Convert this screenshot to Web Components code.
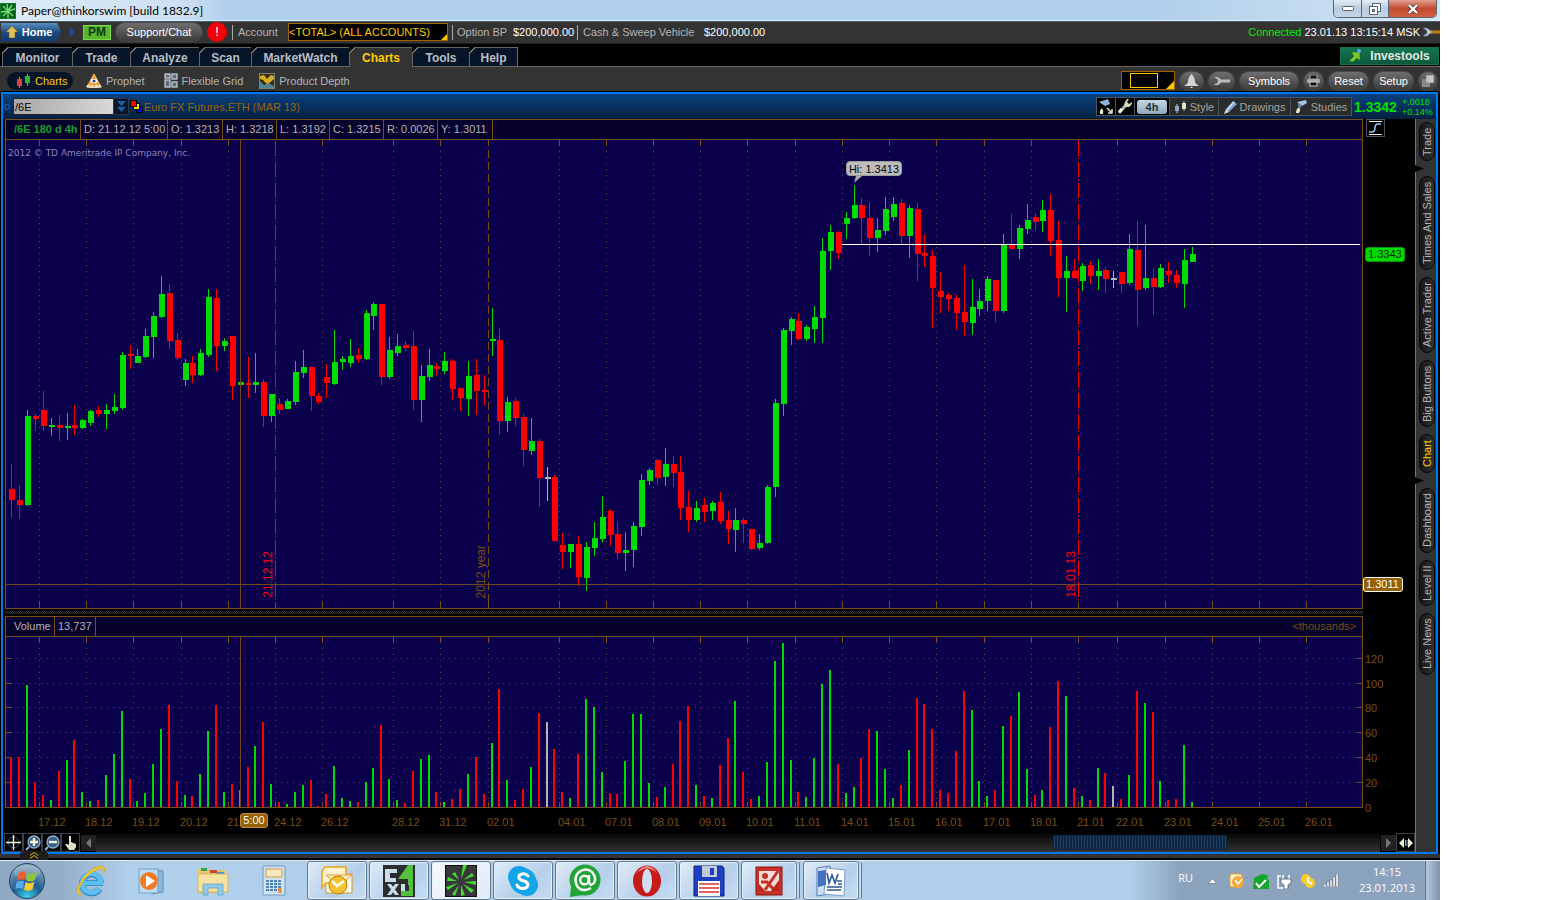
<!DOCTYPE html>
<html lang="en">
<head>
<meta charset="utf-8">
<title>Paper@thinkorswim [build 1832.9]</title>
<style>
html,body{margin:0;height:100%;background:#fff}
body{box-sizing:border-box;padding-right:122px;font:11px/14px "Liberation Sans",Arial,sans-serif;color:#b4b4b4}
</style>
</head>
<body>
<trading-desktop></trading-desktop>
<script>
const RESET = `*,*::before,*::after{box-sizing:border-box}button,input,select{font:inherit;color:inherit;margin:0;padding:0;border:0;background:none;border-radius:0}button{white-space:nowrap;display:flex;align-items:center;justify-content:center}`;
function define(name, html, after) {
  const t = document.createElement('template');
  t.innerHTML = html.replace('<style>', '<style>' + RESET);
  customElements.define(name, class extends HTMLElement {
    constructor() {
      super();
      this.attachShadow({mode: 'open'}).append(t.content.cloneNode(true));
    }
    connectedCallback() { if (after) after(this, this.shadowRoot); }
  });
}

/* ---------- icon set ---------- */
const ICONS = {
  leaf: [16,16,'<rect width="16" height="16" fill="#0b7a2a"/><rect x="1" y="1" width="14" height="14" fill="#0a5a1e"/><path d="M8 8L7 1M8 8L12 2M8 8L15 6M8 8L13 13M8 8L8 15M8 8L3 13M8 8L1 9M8 8L3 3" stroke="#6fe06f" stroke-width="1.4"/>'],
  home: [12,12,'<path d="M6 0L12 6H9V12H3V6H0Z" fill="#e3c25a" stroke="#6b5520" stroke-width=".6"/>'],
  tri: [7,12,'<path d="M0 0L6 6L0 12Z" fill="#17498c"/>'],
  wrench: [18,10,'<path d="M1 1.5Q3 0 5 1.2Q7 2.2 8 3.5H11V6.500H8Q6 9 4 9.200Q2 9.500 1 8L4 7.200L5 5L4 2.700Z" fill="#c3cade" stroke="#555a66" stroke-width=".5"/><rect x="9" y="3.5" width="9" height="3" fill="#c87a10"/>'],
  wrenchg: [18,10,'<path d="M1 1.5Q3 0 5 1.2Q7 2.2 8 3.5H17V6.500H8Q6 9 4 9.200Q2 9.500 1 8L4 7.200L5 5L4 2.700Z" fill="#bdbdbd"/>'],
  candles: [15,14,'<path d="M3.500 3V14M11.500 0V12" stroke="#999" stroke-width="1"/><rect x="1" y="5" width="5" height="7" fill="#d84444"/><rect x="9" y="2" width="5" height="7" fill="#2ab83a"/>'],
  prophet: [16,16,'<path d="M8 1L15 14H1Z" fill="#f2932a" stroke="#f7c878"/><ellipse cx="8" cy="8" rx="3.500" ry="2.300" fill="#fff"/><circle cx="8" cy="8" r="1.600" fill="#2a4a8a"/><path d="M0 14L2 11L4 13L6 11L8 14L10 11L12 13L14 11L16 14L12 15H4Z" fill="#e9dcc2"/>'],
  grid: [14,15,'<g fill="#5c6a78" stroke="#c3ccd6" stroke-width="1.3"><rect x="1" y="1" width="5" height="4"/><rect x="8" y="1" width="5" height="5"/><rect x="1" y="7" width="5" height="7"/><rect x="8" y="9" width="5" height="5"/></g>'],
  depth: [16,16,'<rect x=".5" y=".5" width="15" height="15" fill="#3a2d10" stroke="#77807a"/><path d="M1 8L5 12L9 10L15 13V15H1Z" fill="#4b8698"/><path d="M1 3L5 2L8 6L12 2L15 3V6L9 11L7 10L4 7L1 6Z" fill="#d6ae20"/>'],
  bell: [15,14,'<path d="M7.500 0Q9 1 9 2Q11 3.500 11 8Q12 10.500 15 12H0Q3 10.500 4 8Q4 3.500 6 2Q6 1 7.500 0Z" fill="#d2d2d2"/><rect x="6.500" y="13" width="2" height="1" fill="#eee"/>'],
  print: [13,12,'<rect x="3" y="0" width="7" height="4" fill="#111" stroke="#aaa"/><rect x="0" y="4" width="13" height="4" rx="1" fill="#a8a8a8"/><rect x="3" y="7" width="7" height="4" fill="#111" stroke="#ccc"/>'],
  windows: [12,12,'<rect x="0" y="4" width="8" height="8" fill="#8a8a8a"/><rect x="4" y="0" width="8" height="8" fill="#c6c6c6" stroke="#777" stroke-width=".6"/>'],
  invest: [13,14,'<path d="M2 3H11V12L8 9L4 13L0 12L5 7Z" fill="#7cc832" stroke="#2c6a12" stroke-width=".7"/><circle cx="10" cy="2" r="2" fill="#5aa2ff"/>'],
  dbl: [9,11,'<path d="M0 0H9L4.500 5ZM0 6H9L4.500 11Z" fill="#1f5ea8"/>'],
  flag: [13,13,'<rect x="6.500" y="6.500" width="6" height="6" fill="#00f" stroke="#000"/><rect x="3.500" y="3.500" width="6" height="6" fill="#ffe800" stroke="#000"/><rect x=".5" y=".5" width="6" height="6" fill="#f00" stroke="#000"/>'],
  flaskx: [14,16,'<path d="M0 3L9 0L11 5L6 7Z" fill="#8fb2d8"/><path d="M3 9Q5 12 4 15H1Q0 12 3 9Z" fill="#e6ecc8"/><path d="M8 9L13 14M13 10V14H9" stroke="#dfe6c8" stroke-width="1.500" fill="none"/>'],
  tool: [14,15,'<path d="M1 14L8 6" stroke="#a9b4bd" stroke-width="3"/><path d="M1 13L4 10" stroke="#f3f3d2" stroke-width="3"/><path d="M7 3L9 0H11L9 3L11 5L14 3V5L11 8H8L6 6Z" fill="#cfd8b8"/>'],
  style: [13,12,'<path d="M3 3V12M10 0V10" stroke="#ccc"/><rect x="1" y="5" width="4" height="5" fill="#8ca6c4"/><rect x="8" y="2" width="4" height="6" fill="#dfe8c6"/>'],
  pencil: [13,14,'<path d="M2 9L9 1L13 4L5 12Z" fill="#7ba4d4"/><path d="M3 10L10 2" stroke="#cfe2f5" stroke-width="1.500"/><path d="M2 9L5 12L0 14Z" fill="#e9e3c0"/>'],
  flask: [13,14,'<path d="M2 2L11 0L12 3L7 6Z" fill="#a9c3df"/><path d="M4 7Q6 9 4 13H1Q1 9 4 7Z" fill="#e6ecd0"/><path d="M3 3L7 6L5 8L3 6Z" fill="#5d83ad"/>'],
  curve: [13,14,'<path d="M0 .5H13M0 13.500H13" stroke="#f2f2cc"/><path d="M0 11H4Q6 10 6 7Q6 3 9 3H12" stroke="#8cc4ec" stroke-width="1.600" fill="none"/>'],
  cross: [15,15,'<circle cx="7.500" cy="7.500" r="5.500" fill="none" stroke="#3f5a78"/><path d="M7.500 0V15M0 7.500H15" stroke="#f4f4d8" stroke-width="1.400"/>'],
  zin: [16,16,'<circle cx="9" cy="7" r="6" fill="#395e82" stroke="#8fb0d0" stroke-width="1.300"/><path d="M4 12L1 15" stroke="#8fb0d0" stroke-width="2"/><path d="M9 3V11M5 7H13" stroke="#f4f4d8" stroke-width="2.400"/>'],
  zout: [16,16,'<circle cx="9" cy="7" r="6" fill="#395e82" stroke="#8fb0d0" stroke-width="1.300"/><path d="M4 12L1 15" stroke="#8fb0d0" stroke-width="2"/><path d="M5 7H13" stroke="#f4f4d8" stroke-width="2.400"/>'],
  hand: [12,14,'<path d="M4 0H6V6L11 8V11L9 14H4L0 8H2L4 9Z" fill="#dde3c6"/>'],
  expand: [14,10,'<path d="M5 0V10L0 5ZM9 0V10L14 5Z" fill="#eef2d2"/><path d="M6.500 2V8M8 2V8" stroke="#6fa8d8"/>'],
  left: [5,10,'<path d="M5 0V10L0 5Z" fill="#777"/>'],
  right: [5,10,'<path d="M0 0V10L5 5Z" fill="#777"/>'],
  chev: [8,7,'<path d="M0 3.500L4 .5L8 3.500M0 6.500L4 3.500L8 6.500" stroke="#e0b000" fill="none"/>'],
  orb: [38,38,'<defs><radialGradient id="a" cx=".5" cy=".95" r=".9"><stop offset="0" stop-color="#3fd0ee"/><stop offset=".45" stop-color="#1d5d92"/><stop offset="1" stop-color="#8aa6bf"/></radialGradient></defs><circle cx="19" cy="19" r="17.500" fill="url(#a)" stroke="#29415c"/><ellipse cx="19" cy="10" rx="13" ry="7" fill="#fff" opacity=".2"/><path d="M11 11Q14 8 18 10L16.500 18Q12 16 9 19Z" fill="#ec5f2c"/><path d="M19.500 10.500Q24 13 29 10L27 18Q22 21 18 18Z" fill="#8cc63e"/><path d="M8.500 20.500Q12 17.500 16 19.500L15 27Q11 25 7 27.500Z" fill="#56acec"/><path d="M17.500 20Q22 22.500 26.500 19.500L24.500 27.500Q20 30 16 27.500Z" fill="#fbc934"/>'],
  ie: [30,32,'<path d="M6 18H27M25 18A9.500 9.500 0 1 0 23.500 24" stroke="#2b86c5" stroke-width="6" fill="none"/><path d="M7 18H26.500M25 18A9.500 9.500 0 1 0 23 24" stroke="#5cc0f2" stroke-width="4.600" fill="none"/><path d="M5 30Q-3 29 4 18Q11 4 24 1Q31 1 28 8Q29 3 23 4Q11 8 5 20Q1 27 6 29Z" fill="#f8c832" stroke="#c79410" stroke-width=".5"/>'],
  wmp: [28,28,'<path d="M14 3L25 4V25L14 27Z" fill="#8bb7dc" stroke="#5d8cb5"/><rect x="1" y="2" width="19" height="24" fill="#bcdcf2" stroke="#6da0c8"/><circle cx="11" cy="14" r="9" fill="#f47a20"/><path d="M8 8L17 14L8 20Z" fill="#fff"/>'],
  folder: [32,30,'<path d="M1 4Q1 2 3 2H11L13 4H28V27H1Z" fill="#e6c76e"/><path d="M4 2H10V5H4Z" fill="#2da84a"/><path d="M13 4H20V7H13Z" fill="#cf4430"/><path d="M20 6H27V9H20Z" fill="#4b93d8"/><path d="M1 8H31V26H1Z" fill="#f6e29e" stroke="#c8a850" stroke-width=".7"/><path d="M6 29V18H26V29H21V22H11V29Z" fill="#8fcbe6" stroke="#5a9cc0" stroke-width=".7"/>'],
  calc: [24,31,'<rect x="1" y="1" width="22" height="29" rx="1" fill="#cfe3f4" stroke="#6c98c0"/><rect x="4" y="4" width="16" height="8" fill="#f6e8c0" stroke="#d79a3c"/><g stroke="#4d82b5" stroke-width="2" stroke-dasharray="3 1"><path d="M4 16H20M4 19H20M4 22H20M4 25H17"/></g><path d="M18 23V28" stroke="#ef8a1d" stroke-width="3"/>'],
  outlook: [32,30,'<rect x="5" y="8" width="26" height="19" fill="#fffaf0" stroke="#d9962a"/><path d="M1 5L4 1H25V17H5L1 22Z" fill="#fff3d0" stroke="#e8a520" stroke-width="1.600"/><path d="M5 9H31L18 20Z" fill="#fdeec0" stroke="#e0a040"/><circle cx="17" cy="19" r="9" fill="#f6c22e" stroke="#b97f0a"/><path d="M11 15L16 20L23 15" stroke="#fff" stroke-width="2.500" fill="none"/>'],
  fx: [32,32,'<rect width="32" height="32" fill="#2b2d2f"/><path d="M2 4H14V8H7V13H13V17H2ZM4 19H8L16 30H12ZM12 19H16L8 30H4ZM18 19V30H22V19Z" fill="#c9dceb"/><path d="M30 0V20H25V14H15L25 0ZM18 26H26V20H30V31H18Z" fill="#53c13b"/>'],
  splash: [32,32,'<rect x=".5" y=".5" width="31" height="31" fill="#38383c" stroke="#111"/><path d="M16 14L18 0H22ZM18 15L27 8L29 11ZM19 17L31 16V20ZM18 19L29 25L26 28ZM16 20L20 30L16 31ZM14 20L10 31L7 29ZM13 18L3 25L1 22ZM12 16L2 16L3 12ZM14 15L7 9L10 7Z" fill="#3fdc2c"/>'],
  skype: [32,32,'<rect x="1" y="1" width="22" height="22" rx="11" fill="#12a5e8"/><rect x="9" y="9" width="22" height="22" rx="11" fill="#12a5e8"/><circle cx="16" cy="16" r="13" fill="#12a5e8"/><path d="M21 11Q19 8 15 9Q11 10 12 13Q13 15 17 16Q21 17 21 20Q20 24 15 23.500Q11 23 10 20" stroke="#fff" stroke-width="3" fill="none" stroke-linecap="round"/>'],
  at: [34,34,'<circle cx="17" cy="16" r="15.500" fill="#22a336"/><path d="M3 23L2 33L15 31Z" fill="#22a336"/><path d="M23 24Q14 29 9 22Q5 13 11 8Q18 3 24 8Q29 14 26 19Q22 23 21 18V11" stroke="#fff" stroke-width="2.400" fill="none"/><circle cx="16.500" cy="16" r="4.300" stroke="#fff" stroke-width="2.400" fill="none"/>'],
  opera: [30,32,'<ellipse cx="15" cy="16" rx="14" ry="15.500" fill="#c71a1a"/><ellipse cx="15" cy="16" rx="5" ry="12" fill="#cfdfef"/><path d="M5 8Q8 2 15 1Q22 2 25 8Q15 -1 5 8Z" fill="#f08a80"/>'],
  floppy: [32,32,'<path d="M1 1H29L31 3V31H1Z" fill="#1d3fc4" stroke="#0a2080"/><rect x="9" y="1" width="15" height="11" fill="#c2cad6"/><rect x="17" y="3" width="4" height="7" fill="#1d3fc4"/><rect x="5" y="16" width="22" height="15" fill="#fff"/><path d="M6 19H26M6 23H26M6 27H26" stroke="#e03030" stroke-width="1.500"/>'],
  redx: [28,30,'<rect x="1" y="1" width="26" height="28" fill="#c8302a" stroke="#8a1510"/><rect x="4" y="5" width="20" height="20" fill="#f4dcd8"/><path d="M23 5L10 24M6 16L12 16L20 25" stroke="#c23028" stroke-width="3"/><path d="M4 25V18L10 25ZM24 14V25L16 25Z" fill="#b82820"/><circle cx="10" cy="10" r="3" fill="#c23028"/>'],
  word: [32,32,'<path d="M2 3L15 1L20 28L2 31Z" fill="#cfe0f4" stroke="#5378b8"/><path d="M11 3L30 5L29 31L9 29Z" fill="#fff" stroke="#7e9cc8"/><path d="M3 6L11 5V20L3 22Z" fill="#4273bc"/><path d="M12 8L14 18L17 10L20 18L23 9M12 22H27M12 25H26M22 16H27M23 19H27" stroke="#2a5699" stroke-width="1.600" fill="none"/>'],
  up: [9,6,'<path d="M4.500 .5L8.500 5.500H.5Z" fill="#fff" stroke="#5b6878" stroke-width=".6"/>'],
  tout: [16,16,'<rect x="1" y="1" width="12" height="13" rx="2" fill="#fff2d0" stroke="#e7a020"/><circle cx="9" cy="9" r="6" fill="#f3a83a"/><path d="M6 7L9 11L13 6" stroke="#fff" stroke-width="1.500" fill="none"/>'],
  tok: [16,16,'<path d="M1 5L9 1L15 2L14 6L16 7V16H0Z" fill="#14a62c"/><path d="M3 10L6 14L13 7" stroke="#fff" stroke-width="2" fill="none"/>'],
  tplug: [15,16,'<path d="M4 3H1V15H8" fill="none" stroke="#fff" stroke-width="1.500"/><path d="M6 2V6M12 2V6" stroke="#fff" stroke-width="1.500"/><path d="M4 6H14V10L11 12V16H7V12L4 10Z" fill="#fff" stroke="#3a4656" stroke-width=".7"/>'],
  tphone: [16,16,'<rect x="1" y="1" width="10" height="10" rx="5" fill="#fbcc28"/><rect x="5" y="5" width="10" height="10" rx="5" fill="#fbcc28"/><path d="M8 4V9L12 11" stroke="#fff" stroke-width="2" fill="none"/>'],
  tnet: [15,13,'<g fill="#fff" stroke="#4b5868" stroke-width=".4"><rect x="0" y="10" width="2" height="3"/><rect x="3" y="8" width="2" height="5"/><rect x="6" y="6" width="2" height="7"/><rect x="9" y="3" width="2" height="10"/><rect x="12" y="0" width="2" height="13"/></g>'],
  wmin: [12,5,'<rect x=".5" y=".5" width="11" height="4" rx="1" fill="#fff" stroke="#5a6372"/>'],
  wmax: [12,12,'<rect x="3.500" y=".5" width="8" height="8" fill="#fff" stroke="#5a6372"/><rect x=".5" y="3.500" width="8" height="8" fill="#fff" stroke="#5a6372"/><rect x="3.500" y="6.500" width="2" height="2" fill="#9fb0c4" stroke="#5a6372"/>'],
  wclose: [12,10,'<path d="M2 1L10 9M10 1L2 9" stroke="#5a3a3a" stroke-width="4"/><path d="M2 1L10 9M10 1L2 9" stroke="#fff" stroke-width="2.400"/>']
};
customElements.define('ui-icon', class extends HTMLElement {
  constructor() { super(); this.attachShadow({mode: 'open'}); }
  connectedCallback() {
    const [w, h, body] = ICONS[this.getAttribute('name')];
    this.shadowRoot.innerHTML = `<style>:host{display:block;flex:none;width:${w}px;height:${h}px}svg{display:block}</style><svg width="${w}" height="${h}" viewBox="0 0 ${w} ${h}" fill="none" aria-hidden="true">${body}</svg>`;
  }
});

/* ---------- window title ---------- */
define('window-title', `<style>
:host{display:flex;height:22px;flex:none;background:linear-gradient(90deg,#dcebf8,#cde0f3 180px,#b0cfeb 230px,#b0cfeb 80%,#d3e4f3);border-bottom:1px solid #4b5a6b;box-shadow:inset 0 -1px #dcebf8;color:#000;font:12px/20px Lato,"Open Sans",sans-serif;padding:0 3px 0 0;gap:5px}
ui-icon.l{margin-top:3px}
h1{font:inherit;margin:0;flex:1;padding-top:1px}
.b{display:flex;height:18px;border:1px solid #5a6675;border-top:0;border-radius:0 0 5px 5px;overflow:hidden}
.b button{width:27px;background:linear-gradient(#e3edf7,#b9cbdf 50%,#c4d5e8)}
.b button+button{border-left:1px solid #5a6675}
.b .x{width:48px;background:linear-gradient(#e0a090,#c44a30 50%,#d0603f)}
</style><ui-icon class="l" name="leaf"></ui-icon><h1>Paper@thinkorswim [build 1832.9]</h1>
<div class="b"><button aria-label="Minimize"><ui-icon name="wmin"></ui-icon></button><button aria-label="Restore"><ui-icon name="wmax"></ui-icon></button><button class="x" aria-label="Close"><ui-icon name="wclose"></ui-icon></button></div>`);

/* ---------- pill button ---------- */
define('pill-button', `<style>
:host{display:flex;flex:none}
button{width:100%;border-radius:10px;background:linear-gradient(#6e6e6e,#3c3c3c);border:1px solid #444a52;color:#fff}
</style><button><slot></slot></button>`, (el, r) => { if (el.title) r.querySelector('button').setAttribute('aria-label', el.title); });

/* ---------- account row ---------- */
define('account-bar', `<style>
:host{display:flex;flex:none;height:22px;background:#333;align-items:center;padding:0 0 1px 1px;color:#b4b4b4;border-bottom:1px solid #1c1c1c;white-space:nowrap}
.home{width:60px;height:19px;gap:4px;color:#fff;font-weight:bold;background:linear-gradient(#5b8fc0,#1b4a80 50%,#123a6c);clip-path:polygon(0 0,56px 0,60px 9px,56px 19px,0 19px);padding-right:4px}
.pm{width:28px;height:15px;margin-left:7px;font:bold 12px/15px "Liberation Sans",sans-serif;color:#10380c;background:#58b82c;border:1px solid #7ed850}
.tri{margin-left:8px}
pill-button{width:88px;height:20px;margin-left:4px}
.al{width:20px;height:20px;margin-left:4px;border-radius:10px;background:#f00008;color:#fff;font:13px/20px "Liberation Sans",sans-serif}
i{width:1px;height:15px;background:#aaa;flex:none}
.sel{position:relative;width:160px;height:18px}
select{appearance:none;width:100%;height:100%;background:#000;border:1px solid #a06400;color:#ffc800;padding-left:0;font-size:11px}
.sel::after{content:"";position:absolute;right:1px;bottom:1px;border:3px solid;border-color:transparent #ffc800 #ffc800 transparent}
b{font-weight:normal;color:#fff}
.c{color:#00f000;margin-left:auto}
</style><button class="home"><ui-icon name="home"></ui-icon>Home</button><ui-icon class="tri" name="tri"></ui-icon><button class="pm">PM</button><pill-button>Support/Chat</pill-button><button class="al">!</button>
<i style="margin:0 5px 0 5px"></i><label for="acc" style="width:50px">Account</label><span class="sel"><select id="acc"><option>&lt;TOTAL&gt; (ALL ACCOUNTS)</option></select></span>
<i style="margin:0 4px 0 4px"></i><span style="width:56px">Option BP</span><b style="width:64px">$200,000.00</b><i style="margin-right:5px"></i><span style="width:121px">Cash &amp; Sweep Vehicle</span><b>$200,000.00</b>
<span class="c">Connected</span><b style="margin:0 2px 0 3px">23.01.13 13:15:14 MSK</b><ui-icon name="wrench"></ui-icon>`);

/* ---------- main tabs ---------- */
define('main-tab', `<style>
:host{display:flex;flex:none}
button{position:relative;width:100%;height:20px;background:#061428;border-top:1px solid #666;border-left:1px solid #666;font:bold 12px/14px "Liberation Sans",Arial,sans-serif;color:#b9bec4;padding-top:1px}
button::before{content:"";position:absolute;left:-1px;top:-1px;width:6px;height:6px;background:linear-gradient(135deg,#000 48%,#777 48%,#777 60%,transparent 60%)}
:host([active]) button{background:#333;color:#ffcc00}
:host(:not([active])) button{border-bottom:1px solid #666}
:host(:last-of-type) button{border-right:1px solid #666}
</style><button role="tab"><slot></slot></button>`);
define('main-tabs', `<style>
:host{display:flex;flex:none;height:23px;background:#000;align-items:flex-end;box-shadow:inset 0 -1px #666}
nav{display:flex;padding-left:2px}
.inv{margin:0 1px 2px auto;width:99px;height:18px;gap:8px;background:linear-gradient(#14734e,#0b5a3c);color:#e2e8e4;border:1px solid #14734e;font:bold 12px/14px "Liberation Sans",sans-serif}
</style><nav role="tablist"><main-tab style="width:70px">Monitor</main-tab><main-tab style="width:58px">Trade</main-tab><main-tab style="width:69px">Analyze</main-tab><main-tab style="width:52px">Scan</main-tab><main-tab style="width:98px">MarketWatch</main-tab><main-tab style="width:63px" active>Charts</main-tab><main-tab style="width:57px">Tools</main-tab><main-tab style="width:49px">Help</main-tab></nav>
<button class="inv"><ui-icon name="invest"></ui-icon>Investools</button>`);

/* ---------- sub toolbar ---------- */
define('sub-bar', `<style>
:host{display:flex;flex:none;height:25px;background:#333;align-items:center;padding:3px 2px 0 7px;border-bottom:1px solid #000;color:#b4b4b4;white-space:nowrap}
button{height:18px;gap:4px;justify-content:flex-start}
.on{width:66px;background:#061428;border-radius:9px;color:#ffc800;padding-left:9px}
.box{position:relative;width:54px;height:19px;background:#000;border:1px solid #a06400;margin-left:auto}
.box::before{content:"";width:28px;height:15px;border:1px solid #ffc800;margin-left:8px}
.box::after{content:"";position:absolute;right:0;bottom:0;border:4px solid;border-color:transparent #ffc800 #ffc800 transparent}
pill-button{height:20px;margin-left:4px}
</style><button class="on"><ui-icon name="candles"></ui-icon>Charts</button><button style="margin-left:13px"><ui-icon name="prophet"></ui-icon>Prophet</button><button style="margin-left:19px"><ui-icon name="grid"></ui-icon>Flexible Grid</button><button style="margin-left:16px"><ui-icon name="depth"></ui-icon>Product Depth</button>
<button class="box" aria-label="Layout"></button><pill-button title="Alerts" style="width:25px"><ui-icon name="bell"></ui-icon></pill-button><pill-button title="Tools" style="width:27px"><ui-icon name="wrenchg"></ui-icon></pill-button><pill-button style="width:60px">Symbols</pill-button><pill-button title="Print" style="width:21px"><ui-icon name="print"></ui-icon></pill-button><pill-button style="width:41px">Reset</pill-button><pill-button style="width:41px">Setup</pill-button><pill-button title="Windows" style="width:20px"><ui-icon name="windows"></ui-icon></pill-button>`);

/* ---------- symbol bar ---------- */
define('symbol-bar', `<style>
:host{display:flex;flex:none;height:25px;background:linear-gradient(#0a4180,#04203f);align-items:center;padding:0 2px 0 1px;white-space:nowrap}
.dot{width:6px;height:6px;border:1px solid #1566c0;border-radius:3px;margin-right:3px}
input{width:100px;height:17px;background:linear-gradient(90deg,#a8a8a8,#d8d8d8);color:#000;border:1px solid #222;padding-left:1px;font-size:11px;border-right:0}
.dd{width:16px;height:17px;background:#0a1626;border:1px solid #26384c}
.nm{color:#9a6408;margin:0 auto 0 1px;font:inherit}
.flag{margin-left:1px}
.t{height:19px;background:#2b2b2b;border:1px solid #4a5560;color:#a2a2a2;gap:3px;margin-right:-1px}
.h{width:30px;height:14px;border-radius:3px;background:linear-gradient(#c6d6e2,#8fa8bc);color:#26323c;font:bold 11px/14px "Liberation Sans",sans-serif}
.p{font:bold 14px/18px "Liberation Sans",sans-serif;color:#00e000;width:51px;padding-left:3px}
.g{color:#00e000;font:9px/10px "Liberation Sans",sans-serif;width:32px}
</style><span class="dot"></span><input aria-label="Symbol" value="/6E"><button class="dd" aria-label="Symbol list"><ui-icon name="dbl"></ui-icon></button><ui-icon class="flag" name="flag"></ui-icon><h2 class="nm">Euro FX Futures,ETH (MAR 13)</h2>
<button class="t" style="width:20px;background:#000" aria-label="Quick study"><ui-icon name="flaskx"></ui-icon></button><button class="t" style="width:20px;background:#000" aria-label="Settings"><ui-icon name="tool"></ui-icon></button><button class="t" style="width:36px;background:#000"><span class="h">4h</span></button><button class="t" style="width:50px"><ui-icon name="style"></ui-icon>Style</button><button class="t" style="width:73px"><ui-icon name="pencil"></ui-icon>Drawings</button><button class="t" style="width:62px"><ui-icon name="flask"></ui-icon>Studies</button>
<span class="p">1.3342</span><span class="g">+.0018<br>+0.14%</span>`);

/* ---------- side tabs ---------- */
define('side-tab', `<style>
:host{display:flex;flex:none;width:16px}
button{width:16px;height:100%;writing-mode:vertical-rl;transform:rotate(180deg);border-radius:8px;background:linear-gradient(90deg,#303030,#161616);border:1px solid #0a0a0a;color:#b4b4b4;line-height:14px}
:host([active]) button{color:#ffc800}
</style><button><slot></slot></button>`);
define('side-tabs', `<style>
:host{display:flex;flex-direction:column;flex:none;width:21px;background:#333;border-left:1px solid #777;padding:3px 0 0 3px;gap:7px}
hr{border:0;margin:-3px 0 -3px -4px;width:9px;height:7px;background:#000;clip-path:polygon(0 0,100% 50%,0 100%)}
</style><side-tab style="height:39px">Trade</side-tab><hr><side-tab style="height:94px">Times And Sales</side-tab><side-tab style="height:76px">Active Trader</side-tab><side-tab style="height:67px">Big Buttons</side-tab><side-tab style="height:39px" active>Chart</side-tab><hr><side-tab style="height:65px">Dashboard</side-tab><side-tab style="height:46px">Level II</side-tab><side-tab style="height:62px">Live News</side-tab>`);

/* ---------- bars: colour high bodyTop bodyBottom low volume ---------- */
const BARS = `r464 489 500 518 49,r485 500 505 519 50,g410 416 505 506 122,r414 416 419 431 25,r391 410 426 431 12,g418 425 427 436 7,r415 425 428 441 36,g413 426 428 440 47,r405 425 428 435 67,g419 420 428 429 15,g410 411 423 426 6,r406 410 414 417 7,g404 410 414 429 32,g394 407 411 414 53,g352 355 408 410 96,r345 354 356 369 28,g349 356 363 363 6,g329 336 357 358 14,g312 316 337 358 43,g276 294 317 318 78,r284 293 341 349 102,r333 340 358 360 26,g359 363 380 386 12,r356 363 375 383 11,g349 353 375 376 33,g289 297 355 357 76,r289 298 346 371 102,g338 341 346 351 15,r336 336 386 400 23,g379 382 385 405 17,r357 383 385 398 40,g353 382 385 393 61,r379 382 416 427 85,g394 394 416 422 23,r398 404 410 414 5,g399 401 409 409 3,g361 372 402 405 15,g350 367 373 378 22,r366 367 396 411 27,r393 396 402 404 1,r364 377 383 398 13,g330 362 384 385 41,g356 359 362 370 9,g339 356 363 367 6,r348 355 359 363 5,g310 313 359 360 25,g302 304 316 330 39,r304 304 377 385 82,g337 350 377 379 28,g334 346 353 356 7,r341 345 348 351 4,r331 346 400 410 36,g365 376 400 422 48,g349 365 377 381 52,r363 366 369 376 15,g352 361 371 374 5,r359 361 389 400 8,r388 388 398 411 18,g361 376 399 416 33,r359 375 391 415 50,r375 390 392 405 13,g308 339 341 356 64,r328 340 421 435 118,g397 402 421 432 27,r398 401 418 426 7,r414 417 450 466 18,g418 441 451 455 40,r439 441 478 507 94,w467 477 479 501 85,r475 477 541 541 58,r533 545 552 569 15,g544 544 552 568 9,r536 544 577 586 53,g542 547 578 591 108,g522 538 548 556 100,g496 517 539 542 35,r509 511 535 546 14,r522 534 553 559 13,g532 550 553 571 46,g522 526 550 567 93,g474 480 527 536 93,g468 470 481 485 24,r459 460 478 485 10,g448 464 477 486 20,r456 464 473 487 43,r456 472 508 520 86,r491 507 520 532 101,g501 508 520 522 22,r498 505 512 522 11,g501 503 511 520 9,r492 502 521 524 42,r511 520 529 544 69,g508 520 530 552 106,r518 520 524 543 35,r529 529 549 550 8,g534 543 548 550 11,g485 487 543 544 45,g399 403 487 497 146,g328 330 404 416 164,g317 319 331 345 47,r313 321 339 340 15,g325 327 339 341 10,g306 317 329 343 49,g238 251 318 343 123,g225 232 251 270 137,r231 232 253 259 43,g212 218 224 239 14,g185 205 218 219 20,r198 205 218 244 49,r202 218 238 256 78,g218 230 238 252 76,g197 209 231 235 38,g197 204 217 221 9,r199 203 236 244 22,g205 208 236 258 57,r203 209 254 281 109,r234 253 256 267 103,r250 256 288 328 78,r272 291 297 313 17,r293 295 299 311 14,r295 298 313 330 56,r265 312 322 336 116,g279 307 323 335 97,g289 301 309 316 26,g276 279 301 311 11,r280 280 311 322 17,g234 245 311 313 81,r214 245 249 250 91,g225 228 249 259 115,g204 220 229 234 38,r213 217 222 231 12,g200 210 221 232 17,r194 210 241 256 80,r221 240 278 297 126,g256 271 278 312 111,r259 271 278 278 19,g263 266 281 291 11,r261 265 276 284 7,g259 271 276 290 39,r267 270 279 293 34,w271 278 280 288 21,r272 272 284 293 8,g234 249 283 285 32,r221 250 290 326 116,g225 278 288 290 104,r268 278 287 315 95,g264 268 287 288 26,r262 271 275 283 7,r270 275 283 288 8,g249 260 284 308 62,g247 254 262 262 5`.split(',').map(s => [s[0], ...s.slice(1).split(' ').map(Number)]);
const FILL = {r: '#ff0000', g: '#00dc00', w: '#b4b4b4'};
const LEFT = 6, WIDTH = 1356, BROWN = '#7a4e14';
const barX = i => Math.round(11.45 + 7.87 * i);
const pct = x => ((x - LEFT) / WIDTH * 100) + '%';
const DAYS = [[39,'17.12'],[86,'18.12'],[133,'19.12'],[181,'20.12'],[228,'21'],[275,'24.12'],[322,'26.12'],[393,'28.12'],[440,'31.12'],[488,'02.01'],[559,'04.01'],[606,'07.01'],[653,'08.01'],[700,'09.01'],[747,'10.01'],[795,'11.01'],[842,'14.01'],[889,'15.01'],[936,'16.01'],[984,'17.01'],[1031,'18.01'],[1078,'21.01'],[1117,'22.01'],[1165,'23.01'],[1212,'24.01'],[1259,'25.01'],[1306,'26.01']];
const vline = (x, y1, y2, c, dash) => `<path d="M${x + .5} ${y1}V${y2}" stroke="${c}"${dash ? ` stroke-dasharray="${dash}"` : ''}/>`;
const hline = (y, x1, x2, c, dash) => `<path d="M${x1} ${y + .5}H${x2}" stroke="${c}"${dash ? ` stroke-dasharray="${dash}"` : ''}/>`;
const PLOT = `:host{display:block;position:relative;min-height:0;background:#0a004c}svg{position:absolute;inset:0;width:100%;height:100%;display:block}`;

define('price-plot', `<style>${PLOT}
.cr{position:absolute;left:2px;top:6px;color:#8a86b0;font:9px/14px "DejaVu Sans",sans-serif}
.v{position:absolute;writing-mode:vertical-rl;transform:rotate(180deg);font-size:12px;line-height:12px;bottom:10px}
.hi{position:absolute;left:${pct(846)};top:21px;height:15px;width:56px;border-radius:4px;background:#bdbdbd;border:1px solid #999;color:#000;text-align:center;line-height:14px;white-space:nowrap}
.hi::after{content:"";position:absolute;left:7px;top:14px;width:8px;height:7px;background:#aaa;clip-path:polygon(25% 0,100% 0,0 100%)}
</style><svg viewBox="6 140 1356 468" preserveAspectRatio="none" shape-rendering="crispEdges" fill="none" role="img" aria-label="Price chart"></svg>
<span class="cr">2012 © TD Ameritrade IP Company, Inc.</span><span class="v" style="left:${pct(262)};color:#f00">21.12.12</span><span class="v" style="left:${pct(475)};color:${BROWN}">2012 year</span><span class="v" style="left:${pct(1065)};color:#f00">18.01.13</span><span class="hi">Hi: 1.3413</span>`,
(el, r) => {
  let s = '';
  for (const [x] of DAYS) {
    s += vline(x, 602, 608, BROWN);
    if (x === 275 || x === 1078) s += vline(x, 141, 602, '#ff0000', '15 2 1 3');
    else if (x === 488) s += vline(x, 150, 602, BROWN, '8 4') + vline(x, 140, 146, BROWN);
    else s += vline(x, 140, 146, BROWN) + vline(x, 151, 602, '#66463a', '1 5');
  }
  BARS.forEach(([c, h, t, b, l], i) => {
    const x = barX(i);
    s += `<path fill="${FILL[c]}" d="M${x} ${h}h1V${l}h-1ZM${x - 2} ${t}h6V${b}h-6Z"/>`;
  });
  s += vline(240, 140, 608, '#6d4a18') + hline(584, 6, 1362, '#6d4a18') + hline(244, 842, 1360, '#ffffff');
  r.querySelector('svg').innerHTML = s;
});

define('volume-plot', `<style>${PLOT}</style><svg viewBox="6 637 1356 170" preserveAspectRatio="none" shape-rendering="crispEdges" fill="none" role="img" aria-label="Volume chart"></svg>`,
(el, r) => {
  let s = '';
  for (const [x] of DAYS) s += vline(x, 637, 643, BROWN) + vline(x, 648, 801, '#66463a', '1 5') + vline(x, 802, 807, BROWN);
  for (const y of [658, 683, 707, 732, 757, 782]) s += hline(y, 6, 12, BROWN) + hline(y, 17, 1356, '#66463a', '1 5') + hline(y, 1357, 1362, BROWN);
  BARS.forEach(([c, , , , , v], i) => { s += `<path fill="${FILL[c]}" d="M${barX(i) - 1} 807v${-v}h2V807Z"/>`; });
  s += vline(240, 637, 807, '#6d4a18');
  r.querySelector('svg').innerHTML = s;
});

/* ---------- chart area ---------- */
define('info-row', `<style>
:host{display:flex;flex:none;height:20px;background:#06002d;border-bottom:1px solid ${BROWN};line-height:18px;color:#b4b4b4;white-space:nowrap}
</style><slot></slot>`);
define('chart-area', `<style>
:host{display:flex;flex:1;min-width:0;min-height:0;flex-direction:column;background:#000;padding-left:2px}
.row{display:flex;min-height:0}
.pane{display:flex;flex-direction:column;flex:1;min-width:0;border:1px solid ${BROWN}}
price-plot,volume-plot{flex:1}
.price{flex:490}.vol{flex:192}
.split{height:7px;flex:none;padding:2px 0}
.split::before{content:"";display:block;height:3px;background:repeating-conic-gradient(#3a3a3a 0 25%,#000 0 50%) 0 0/2px 2px;margin-right:52px}
.y{position:relative;width:52px;flex:none;color:${BROWN}}
.y span,.tag{position:absolute;left:2px;line-height:12px}
info-row span{border-right:1px solid ${BROWN};padding:0 0 0 3px;flex:none}
.y .tag,.tag{border-radius:3px;height:15px;line-height:13px;width:40px;padding-left:2px;border:1px solid}
.brown{background:#966000;border-color:#c09040;color:#fff}
.x{position:relative;height:25px;flex:none;margin:0 53px 0 1px;color:${BROWN}}
.x span{position:absolute;top:7px}
.x .tag{top:5px;width:28px;text-align:center;padding:0}
.bot{display:flex;height:19px;flex:none;margin-left:-1px}
.ib{width:19px;border:1px solid #3b444e;background:#000;height:19px}
.sb{width:15px;background:#222;height:16px;margin-left:1px;align-self:center}
.track{flex:1;display:flex;background:linear-gradient(#050505,#333);padding:2px 0 2px}
.track::before{content:"";flex:958}
.track::after{content:"";flex:153}
.thumb{flex:172;background:repeating-linear-gradient(90deg,#1d4068 0 1px,#10253f 1px 3px);border:1px solid #0f2338}
.curve{width:19px;height:18px;border:1px solid #4a5560;margin-left:3px}
</style>
<div class="row price"><div class="pane"><info-row><span style="width:75px;padding-left:8px;color:#14a028;font-weight:bold">/6E 180 d 4h</span><span style="width:87px">D: 21.12.12 5:00</span><span style="width:55px">O: 1.3213</span><span style="width:54px">H: 1.3218</span><span style="width:53px">L: 1.3192</span><span style="width:54px">C: 1.3215</span><span style="width:54px">R: 0.0026</span><span style="width:55px">Y: 1.3011</span></info-row><price-plot></price-plot></div>
<div class="y"><button class="curve" aria-label="Scale"><ui-icon name="curve"></ui-icon></button><span class="tag" style="top:26.2%;background:#00dc00;border-color:#009a00;color:#003000">1.3343</span><span class="tag brown" style="top:93.5%;left:0">1.3011</span></div></div>
<div class="split"></div>
<div class="row vol"><div class="pane"><info-row><span style="width:49px;padding-left:8px">Volume</span><span style="width:41px">13,737</span><em style="margin-left:auto;padding-right:6px;font-style:normal;color:${BROWN}">&lt;thousands&gt;</em></info-row><volume-plot></volume-plot></div><div class="y" id="vy"></div></div>
<div class="x" id="dates"></div>
<div class="bot"><button class="ib" aria-label="Crosshair"><ui-icon name="cross"></ui-icon></button><button class="ib" aria-label="Zoom in"><ui-icon name="zin"></ui-icon></button><button class="ib" aria-label="Zoom out"><ui-icon name="zout"></ui-icon></button><button class="ib" aria-label="Pan"><ui-icon name="hand"></ui-icon></button><button class="sb" aria-label="Scroll left"><ui-icon name="left"></ui-icon></button><div class="track"><div class="thumb"></div></div><button class="sb" aria-label="Scroll right"><ui-icon name="right"></ui-icon></button><button class="ib" aria-label="Expand"><ui-icon name="expand"></ui-icon></button></div>`,
(el, r) => {
  r.getElementById('dates').innerHTML = DAYS.map(([x, t]) => `<span style="left:${pct(x - 1)}">${t}</span>`).join('') + `<span class="tag brown" style="left:${pct(240)}">5:00</span>`;
  r.getElementById('vy').innerHTML = [[120,659],[100,684],[80,708],[60,733],[40,758],[20,783],[0,808]].map(([t, y]) => `<span style="top:${(y - 6 - 616) / 192 * 100}%">${t}</span>`).join('');
});

define('chart-frame', `<style>
:host{display:flex;flex:1;flex-direction:column;min-height:0;border:2px solid #0078f0;margin:0 2px 0 1px}
.m{display:flex;flex:1;min-height:0}
</style><symbol-bar></symbol-bar><div class="m"><chart-area></chart-area><side-tabs></side-tabs></div>`);

/* ---------- taskbar ---------- */
define('task-item', `<style>
:host{display:flex;flex:none;width:60px;height:39px;margin-right:2px}
button{width:100%;border:1px solid #5d7894;border-radius:3px;background:linear-gradient(135deg,#dfecf8,#b5cfea 60%,#c7dcf1);box-shadow:inset 0 0 0 1px #e6f1fb}
:host([active]) button{background:linear-gradient(135deg,#f6fafd,#dfeaf5)}
:host([stack]) button{width:56px;box-shadow:inset 0 0 0 1px #e6f1fb,3px 0 0 -1px #c7dcf1,4px 0 0 -1px #5d7894}
</style><button><slot></slot></button>`, (el, r) => r.querySelector('button').setAttribute('aria-label', el.title));
define('task-bar', `<style>
:host{display:flex;flex:none;height:40px;align-items:center;background:linear-gradient(90deg,#8fa9c4,#94aec9 60px,#b0cfeb 130px,#b0cfeb 1130px,#8ba3bd 1180px,#8ba3bd);border-top:1px solid #dcebf8;color:#fff;font:11px/16px "Open Sans","Noto Sans",sans-serif}
.q{width:61px;height:36px;flex:none}
.q:first-of-type{width:54px;margin-right:6px}
.q:last-of-type{margin-right:3px}
.tray{display:flex;align-items:center;margin-left:auto}
.tray ui-icon{margin-right:8px}
.clk{text-align:center;width:60px;margin:0 8px 2px 10px}
.show{width:15px;height:39px;border-left:1px solid #60758c;background:linear-gradient(90deg,#b6c6d8,#7d95b0)}
</style><button class="q" aria-label="Start"><ui-icon name="orb"></ui-icon></button><button class="q" aria-label="Internet Explorer"><ui-icon name="ie"></ui-icon></button><button class="q" aria-label="Media Player"><ui-icon name="wmp"></ui-icon></button><button class="q" aria-label="Explorer"><ui-icon name="folder"></ui-icon></button><button class="q" aria-label="Calculator"><ui-icon name="calc"></ui-icon></button>
<task-item title="Outlook"><ui-icon name="outlook"></ui-icon></task-item><task-item title="FX4U"><ui-icon name="fx"></ui-icon></task-item><task-item title="thinkorswim" active><ui-icon name="splash"></ui-icon></task-item><task-item title="Skype"><ui-icon name="skype"></ui-icon></task-item><task-item title="Agent"><ui-icon name="at"></ui-icon></task-item><task-item title="Opera"><ui-icon name="opera"></ui-icon></task-item><task-item title="Commander"><ui-icon name="floppy"></ui-icon></task-item><task-item title="Pictures" stack><ui-icon name="redx"></ui-icon></task-item><task-item title="Word" stack><ui-icon name="word"></ui-icon></task-item>
<div class="tray"><span style="margin:0 15px 6px 0">RU</span><ui-icon name="up" style="margin-right:12px"></ui-icon><ui-icon name="tout"></ui-icon><ui-icon name="tok"></ui-icon><ui-icon name="tplug"></ui-icon><ui-icon name="tphone"></ui-icon><ui-icon name="tnet"></ui-icon><div class="clk">14:15<br>23.01.2013</div><button class="show" aria-label="Show desktop"></button></div>`);

define('trading-desktop', `<style>
:host{display:flex;flex-direction:column;height:100vh;min-height:600px;background:#000}
.ft{position:relative;height:6px;flex:none;background:#333;border-bottom:2px solid #000}
.ft button{position:absolute;left:20px;bottom:-2px;width:28px;height:9px;background:#1d1d1d;border-radius:4px 4px 0 0}
</style><window-title></window-title><account-bar></account-bar><main-tabs></main-tabs><sub-bar></sub-bar><chart-frame></chart-frame><div class="ft"><button aria-label="Show gadgets"><ui-icon name="chev"></ui-icon></button></div><task-bar></task-bar>`);
</script>
</body>
</html>
